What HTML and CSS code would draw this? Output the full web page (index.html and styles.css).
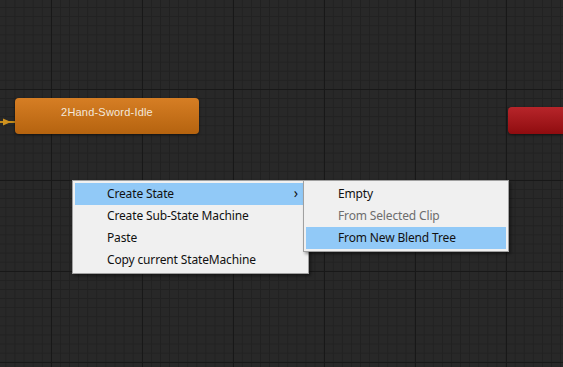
FILE: index.html
```html
<!DOCTYPE html>
<html lang="en">
<head>
    <meta charset="UTF-8">
    <meta name="viewport" content="width=device-width, initial-scale=1.0">
    <title>Animator</title>
    <link rel="stylesheet" href="styles.css">
</head>
<body>
    <div class="graph">
        <!-- transicion entrante -->
        <div class="link">
            <svg width="16" height="10" viewBox="0 0 16 10">
                <line x1="0" y1="5" x2="16" y2="5" stroke="#c08a1c" stroke-width="2"/>
                <polygon points="3,1.5 11,5 3,8.5" fill="#cf921f"/>
            </svg>
        </div>

        <div class="node node-orange">2Hand-Sword-Idle</div>
        <div class="node node-red"></div>

        <!-- menu contextual -->
        <ul class="menu menu-main">
            <li class="item active">Create State <span class="arrow">&rsaquo;</span></li>
            <li class="item">Create Sub-State Machine</li>
            <li class="item">Paste</li>
            <li class="item">Copy current StateMachine</li>
        </ul>

        <ul class="menu menu-sub">
            <li class="item">Empty</li>
            <li class="item disabled">From Selected Clip</li>
            <li class="item active">From New Blend Tree</li>
        </ul>
    </div>
</body>
</html>
```

FILE: styles.css
```css
body {
    margin: 0;
    padding: 0;
    overflow: hidden;
    font-family: 'Noto Sans', 'Noto Sans CJK KR', sans-serif;
}
.graph {
    position: relative;
    width: 563px;
    height: 367px;
    background-color: #282828;
    background-image:
        linear-gradient(to right, #181818 1px, transparent 1px),
        linear-gradient(to bottom, #181818 1px, transparent 1px),
        linear-gradient(to right, #212121 1px, transparent 1px),
        linear-gradient(to bottom, #212121 1px, transparent 1px);
    background-size: 91px 91px, 91px 91px, 9.1px 9.1px, 9.1px 9.1px;
    background-position: 51px 89px, 51px 89px, 5.4px 7.1px, 5.4px 7.1px;
}
.link {
    position: absolute;
    left: 0;
    top: 117px;
    line-height: 0;
}
.node {
    position: absolute;
    border-radius: 4px;
    box-shadow: 0 1px 3px rgba(0, 0, 0, 0.5);
}
.node-orange {
    left: 15px;
    top: 98px;
    width: 184px;
    height: 36px;
    background: linear-gradient(to bottom, #d67e24, #b5630f);
    color: #f3e8dc;
    font-family: 'Liberation Sans', Arial, sans-serif;
    font-size: 11px;
    letter-spacing: 0.2px;
    line-height: 16px;
    text-align: center;
    box-sizing: border-box;
    padding-top: 6px;
}
.node-red {
    left: 508px;
    top: 107px;
    width: 80px;
    height: 27px;
    background: linear-gradient(to bottom, #b7252a, #8f0c0f);
}
.menu {
    position: absolute;
    margin: 0;
    padding: 2px;
    list-style: none;
    background: #f0f0f0;
    border: 1px solid #a0a0a0;
    box-shadow: 2px 2px 3px rgba(0, 0, 0, 0.4);
    font-size: 12px;
    letter-spacing: -0.15px;
    color: #111;
}
.menu-main {
    left: 72px;
    top: 180px;
    width: 231px;
}
.menu-sub {
    left: 303px;
    top: 180px;
    width: 200px;
    z-index: 2;
}
.item {
    position: relative;
    height: 22px;
    line-height: 21px;
    padding-left: 32px;
}
.item.active {
    background: #91c9f7;
}
.item.disabled {
    color: #6d6d6d;
}
.arrow {
    position: absolute;
    right: 8px;
    top: -1px;
    font-size: 14px;
}
```
